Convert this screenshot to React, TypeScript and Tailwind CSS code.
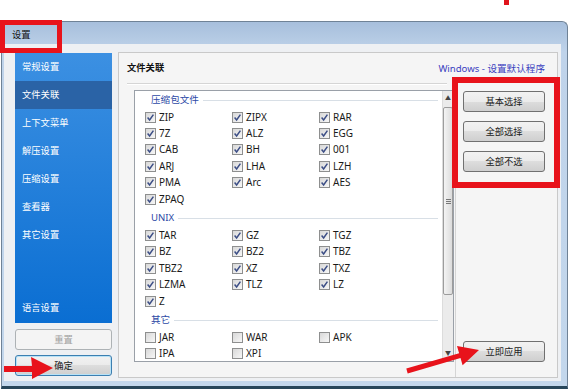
import React from "react";

const font = "font-['Noto_Sans','Noto_Sans_CJK_SC',sans-serif]";

const sections: { title: string; items: { name: string; on: boolean }[] }[] = [
	{
		title: "压缩包文件",
		items: ["ZIP", "ZIPX", "RAR", "7Z", "ALZ", "EGG", "CAB", "BH", "001", "ARJ", "LHA", "LZH", "PMA", "Arc", "AES", "ZPAQ"].map((n) => ({ name: n, on: true })),
	},
	{
		title: "UNIX",
		items: ["TAR", "GZ", "TGZ", "BZ", "BZ2", "TBZ", "TBZ2", "XZ", "TXZ", "LZMA", "TLZ", "LZ", "Z"].map((n) => ({ name: n, on: true })),
	},
	{
		title: "其它",
		items: ["JAR", "WAR", "APK", "IPA", "XPI"].map((n) => ({ name: n, on: false })),
	},
];

const menu = ["常规设置", "文件关联", "上下文菜单", "解压设置", "压缩设置", "查看器", "其它设置"];

function Check({ on }: { on: boolean }) {
	return (
		<span className="w-[11px] h-[11px] shrink-0 border border-[#8e8f8f] bg-[linear-gradient(135deg,#d8d8d8,#f7f7f7)] flex items-center justify-center">
			{on && (
				<svg width="9" height="9" viewBox="0 0 9 9">
					<path d="M1.6 4.6 L3.6 7 L7.4 1.6" fill="none" stroke="#3c4e86" strokeWidth="1.5" />
				</svg>
			)}
		</span>
	);
}

function WinButton({ label, variant }: { label: string; variant?: "default" | "disabled" }) {
	const border =
		variant === "default"
			? "border-[#3c7fb1] shadow-[inset_0_0_0_1px_#b7e2f7]"
			: variant === "disabled"
				? "border-[#adb2b5] bg-none"
				: "border-[#707070]";
	const bg =
		variant === "disabled"
			? "bg-[#f4f4f4] text-[#a0a0a0]"
			: "bg-[linear-gradient(#f2f2f2_0%,#ebebeb_50%,#dddddd_50%,#cfcfcf_100%)] text-[#1c1c1c]";
	return (
		<div className={`h-[21px] w-full rounded-[3px] border ${border} ${bg} flex items-center justify-center text-[9.3px]`}>
			{label}
		</div>
	);
}

export default function App() {
	return (
		<div className={`relative w-[570px] h-[389px] bg-white overflow-hidden ${font}`}>
			<div className="h-[21px]" />

			{/* window */}
			<div className="ml-[1px] w-[567px] h-[368px] flex flex-col border border-[#6f8296] border-b-[3px] border-b-[#27465a] rounded-tr-[6px] bg-[linear-gradient(#a7bfdc,#bfd3ea_30px,#c3d7ec)]">
				<div className="h-[22px] pl-[10px] pt-[3px] flex items-center text-[9.3px] text-[#111]">设置</div>

				<div className="h-[337px] ml-[2px] mr-[6px] bg-[#eef0f3] flex">
					{/* left column */}
					<div className="ml-[11px] w-[97px] pt-[9px] flex flex-col">
						<div className="h-[270px] bg-[linear-gradient(#3c90e2,#0a6ed2)] flex flex-col">
							{menu.map((m) => (
								<div
									key={m}
									className={`h-[28px] pl-[7px] flex items-center text-[9.3px] text-white ${m === "文件关联" ? "bg-[#2a63a6]" : ""}`}
								>
									{m}
								</div>
							))}
							<div className="mt-auto mb-[1px] h-[28px] pl-[7px] flex items-center text-[9.3px] text-white">语言设置</div>
						</div>
						<div className="mt-[6px]">
							<WinButton label="重置" variant="disabled" />
						</div>
						<div className="mt-[5px]">
							<WinButton label="确定" variant="default" />
						</div>
					</div>

					{/* main panel */}
					<div className="ml-[6px] mt-[8px] mb-[3px] w-[440px] border border-[#c9c9c9] bg-[#f5f5f5] flex flex-col">
						<div className="h-[30px] flex items-center justify-between pl-[8px] pr-[12px]">
							<span className="text-[9.3px] font-bold text-[#111]">文件关联</span>
							<span className="pt-[3px] text-[9.6px] text-[#3a3fc0]">Windows - 设置默认程序</span>
						</div>

						<div className="flex-1 flex">
							<div className="w-[336px] flex flex-col">
								<div className="mx-[8px] h-[2px] border-t border-[#d5d5d5] border-b border-b-white" />
								<div className="ml-[15px] mt-[5px] w-[320px] h-[272px] border border-[#9aa0a8] bg-white flex">
									<div className="flex-1 pl-[10px] pt-[0px]">
										{sections.map((s, i) => (
											<div key={s.title} className={i > 0 ? "mt-[2px]" : ""}>
												<div className="h-[18px] flex items-center pl-[6px]">
													<span className="text-[9.6px] text-[#2d4aa6]">{s.title}</span>
													<span className="flex-1 ml-[4px] mr-[4px] h-px bg-[#d8dfe6]" />
												</div>
												<div className="grid grid-cols-[87px_87px_87px] auto-rows-[16.4px]">
													{s.items.map((it) => (
														<div key={it.name} className="flex items-center gap-[3px]">
															<Check on={it.on} />
															<span className="text-[10px] text-[#1a1a1a]">{it.name}</span>
														</div>
													))}
												</div>
											</div>
										))}
									</div>
									{/* scrollbar */}
									<div className="w-[11px] bg-[#ebebeb] border-l border-[#dcdcdc] flex flex-col items-center">
										<div className="h-[15px] flex items-center justify-center text-[6px] text-[#444]">▲</div>
										<div className="mt-[1px] w-[10px] h-[188px] rounded-[2px] border border-[#9c9c9c] bg-[linear-gradient(90deg,#f3f3f3,#dcdcdc)] flex flex-col items-center justify-center gap-[1px]">
											<span className="w-[5px] h-px bg-[#777]" />
											<span className="w-[5px] h-px bg-[#777]" />
											<span className="w-[5px] h-px bg-[#777]" />
										</div>
										<div className="mt-auto h-[15px] flex items-center justify-center text-[6px] text-[#444]">▼</div>
									</div>
								</div>
							</div>

							<div className="flex-1 border-l border-[#d5d5d5] pl-[7px] pr-[12px] pt-[8px] pb-[15px] flex flex-col">
								<div className="flex flex-col gap-[9px]">
									<WinButton label="基本选择" />
									<WinButton label="全部选择" />
									<WinButton label="全部不选" />
								</div>
								<div className="mt-auto">
									<WinButton label="立即应用" />
								</div>
							</div>
						</div>
					</div>
				</div>
			</div>

			{/* annotations */}
			<div className="absolute left-[504px] top-0 w-[5px] h-[5px] bg-[#e0141c]" />
			<div className="absolute left-0 top-[20px] w-[62px] h-[33px] border-[5px] border-[#e8131b]" />
			<div className="absolute left-[452px] top-[77px] w-[108px] h-[111px] border-[6px] border-[#e8131b]" />
			<svg className="absolute left-0 top-0" width="570" height="389" viewBox="0 0 570 389">
				<polygon points="4,366 32,366 31,357 53,368 32,379 32,372 4,372" fill="#e8131b" />
				<polygon points="406.3,368.6 459.1,353.2 457,346 479,350 462.6,365.2 460.5,358 407.7,373.4" fill="#e8131b" />
			</svg>
		</div>
	);
}
